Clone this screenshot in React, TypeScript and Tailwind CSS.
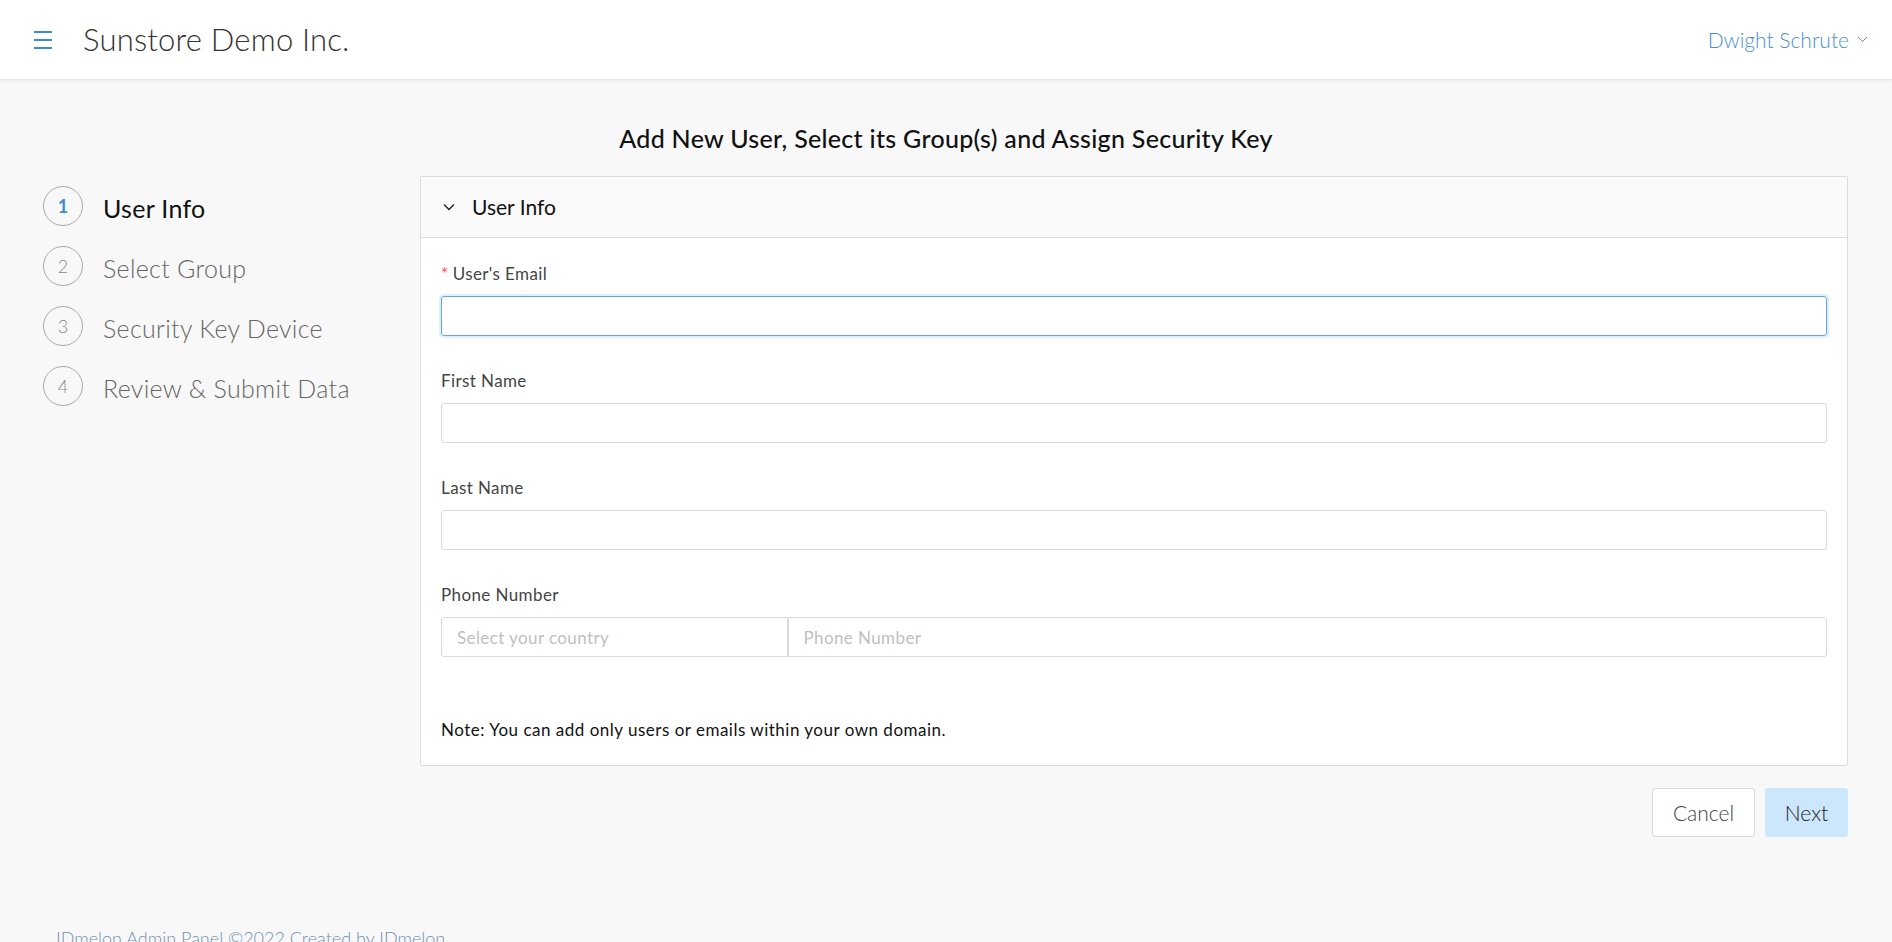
import { useState } from "react";

const steps = [
  { n: 1, label: "User Info" },
  { n: 2, label: "Select Group" },
  { n: 3, label: "Security Key Device" },
  { n: 4, label: "Review & Submit Data" },
];

export default function App() {
  const [email, setEmail] = useState("");
  const [first, setFirst] = useState("");
  const [last, setLast] = useState("");
  const [phone, setPhone] = useState("");

  return (
    <div className="min-h-screen bg-[#f8f8f8] font-['Lato',sans-serif]">
      {/* ================= TOP BAR ================= */}
      <header className="h-[80px] bg-white border-b border-[#e6e6e6] shadow-[0_1px_3px_rgba(0,0,0,0.06)] flex items-center pl-[34px] pr-[24px]">
        <button className="flex flex-col gap-[6px] w-[18px]">
          <span className="block h-[2px] w-[18px] bg-[#3f8bd1]" />
          <span className="block h-[2px] w-[18px] bg-[#3f8bd1]" />
          <span className="block h-[2px] w-[18px] bg-[#3f8bd1]" />
        </button>
        <h1 className="ml-[31px] text-[31px] font-light text-[#333] tracking-[0.2px]">
          Sunstore Demo Inc.
        </h1>
        <div className="ml-auto flex items-center gap-[8px] text-[21px] font-light text-[#4a8fd4]">
          Dwight Schrute
          <svg width="11" height="7" viewBox="0 0 11 7" fill="none">
            <path d="M1 1l4.5 4.5L10 1" stroke="#4a8fd4" strokeWidth="1" />
          </svg>
        </div>
      </header>

      {/* ================= TITLE ================= */}
      <h2 className="mt-[42px] text-center text-[25px] leading-[32px] font-medium text-[#111] tracking-[0.3px]">
        Add New User, Select its Group(s) and Assign Security Key
      </h2>

      <div className="mt-[22px] flex pr-[44px]">
        {/* ================= STEPS ================= */}
        <div className="w-[420px] shrink-0 pl-[43px] pt-[10px] flex flex-col gap-[20px]">
          {steps.map((s) => (
            <div key={s.n} className="flex items-center h-[40px]">
              <div
                className={`w-[40px] h-[40px] rounded-full border border-[#aaa] flex items-center justify-center text-[18px] ${
                  s.n === 1 ? "text-[#3f8bd1] font-bold" : "text-[#888] font-light"
                }`}
              >
                {s.n}
              </div>
              <span
                className={`ml-[20px] pt-[6px] text-[25px] tracking-[0.3px] ${
                  s.n === 1 ? "text-[#111]" : "text-[#666] font-light"
                }`}
              >
                {s.label}
              </span>
            </div>
          ))}
        </div>

        {/* ================= FORM PANEL ================= */}
        <div className="flex-1">
          <div className="border border-[#dcdcdc] bg-white rounded-[2px]">
            <div className="h-[61px] bg-[#fafafa] border-b border-[#dcdcdc] flex items-center pl-[22px]">
              <svg width="12" height="8" viewBox="0 0 12 8" fill="none">
                <path d="M1 1.5l5 5 5-5" stroke="#222" strokeWidth="1.4" />
              </svg>
              <span className="ml-[17px] text-[21px] text-[#111]">User Info</span>
            </div>

            <div className="px-5 pt-[24px] pb-[23px]">
              <Field label="User's Email" required>
                <input
                  value={email}
                  onChange={(e) => setEmail(e.target.value)}
                  className="w-full h-[40px] rounded-[3px] border border-[#62a6e5] shadow-[0_0_0_2px_rgba(24,144,255,0.15)] px-3 outline-none"
                />
              </Field>
              <Field label="First Name">
                <input
                  value={first}
                  onChange={(e) => setFirst(e.target.value)}
                  className="w-full h-[40px] rounded-[3px] border border-[#d9d9d9] px-3 outline-none"
                />
              </Field>
              <Field label="Last Name">
                <input
                  value={last}
                  onChange={(e) => setLast(e.target.value)}
                  className="w-full h-[40px] rounded-[3px] border border-[#d9d9d9] px-3 outline-none"
                />
              </Field>
              <Field label="Phone Number">
                <div className="flex">
                  <input
                    placeholder="Select your country"
                    className="w-1/4 h-[40px] rounded-l-[3px] border border-[#d9d9d9] px-[15px] text-[17px] tracking-[0.4px] placeholder:text-[#bfbfbf] outline-none"
                  />
                  <input
                    value={phone}
                    onChange={(e) => setPhone(e.target.value)}
                    placeholder="Phone Number"
                    className="flex-1 h-[40px] rounded-r-[3px] border border-[#d9d9d9] px-[15px] text-[17px] tracking-[0.4px] placeholder:text-[#bfbfbf] outline-none"
                  />
                </div>
              </Field>

              <p className="mt-[61px] text-[17px] leading-[24px] tracking-[0.5px] text-[#111]">
                Note: You can add only users or emails within your own domain.
              </p>
            </div>
          </div>

          <div className="mt-[22px] flex justify-end gap-[10px]">
            <button className="h-[49px] w-[103px] rounded-[3px] border border-[#d9d9d9] bg-white text-[21px] font-light text-[#444]">
              Cancel
            </button>
            <button className="h-[49px] w-[83px] rounded-[3px] bg-[#cce6fc] text-[21px] font-light text-[#222]">
              Next
            </button>
          </div>
        </div>
      </div>

      {/* ================= FOOTER ================= */}
      <footer className="mt-[88px] pl-[56px] pb-6 text-[18px] text-[#6e8fb3] font-light">
        IDmelon Admin Panel ©2022 Created by IDmelon
      </footer>
    </div>
  );
}

function Field({
  label,
  required,
  children,
}: {
  label: string;
  required?: boolean;
  children: React.ReactNode;
}) {
  return (
    <div className="mb-[33px] last:mb-0">
      <label className="block h-[24px] leading-[24px] text-[17px] tracking-[0.4px] text-[#444] mb-[10px]">
        {required && <span className="text-[#ff4d4f] mr-[4px]">*</span>}
        {label}
      </label>
      {children}
    </div>
  );
}
